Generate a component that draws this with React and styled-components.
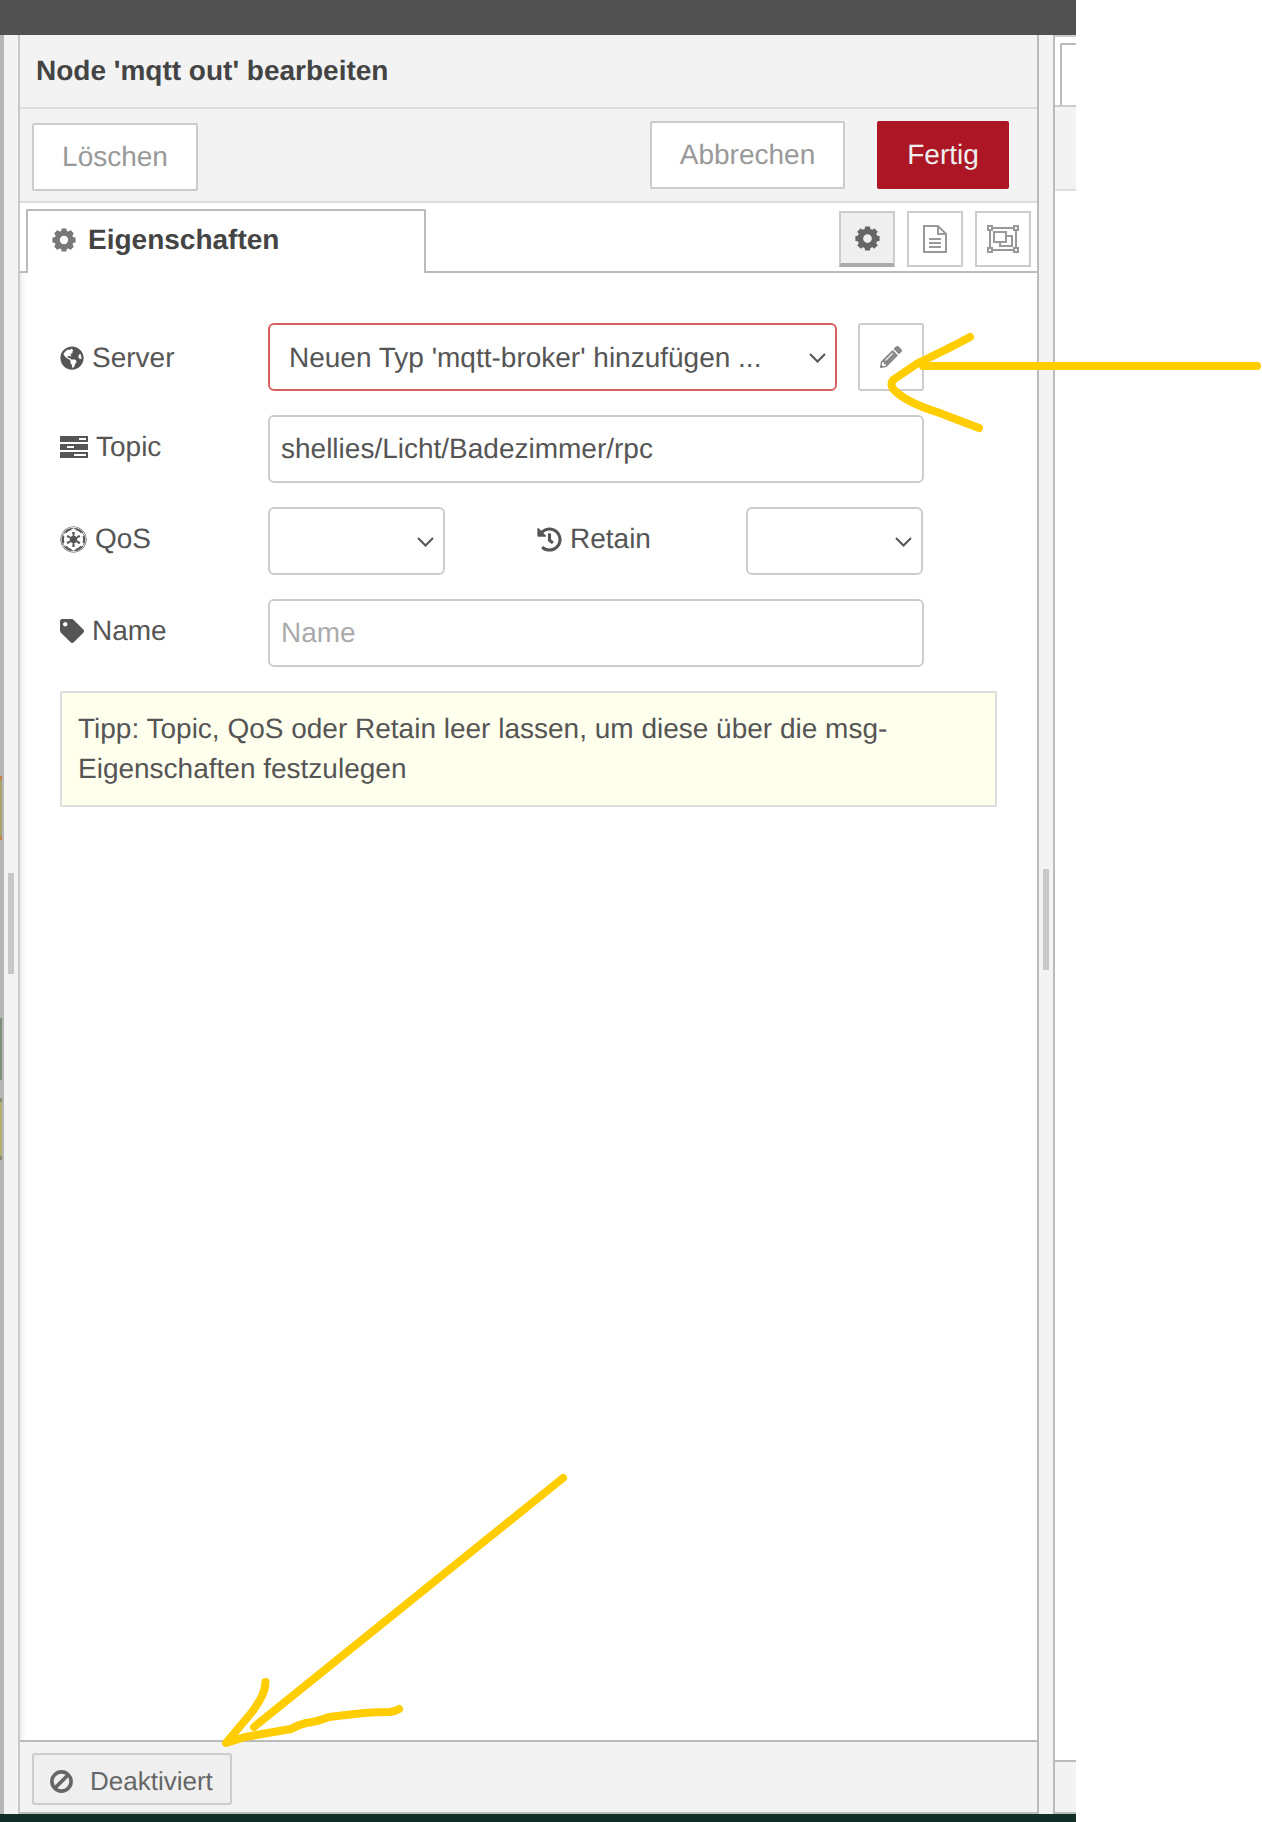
import React from 'react'
import styled, { createGlobalStyle } from 'styled-components'
import { FaGlobeAmericas, FaEmpire, FaTag, FaHistory, FaPencilAlt } from 'react-icons/fa'

const GlobalStyle = createGlobalStyle`
  html, body {
    margin: 0;
    padding: 0;
    background: #fff;
  }
  * {
    box-sizing: border-box;
  }
`

const Page = styled.div`
  position: relative;
  width: 1262px;
  height: 1822px;
  overflow: hidden;
  font-family: 'Liberation Sans', Arial, sans-serif;
  font-size: 28px;
  color: #555;
  text-rendering: geometricPrecision;
`

const Shell = styled.div`
  width: 1076px;
  height: 1822px;
  display: flex;
  flex-direction: column;
`

const TopBar = styled.div`
  height: 35px;
  flex: none;
  background: #515151;
`

const Workspace = styled.div`
  flex: 1;
  display: flex;
  min-height: 0;
`

const BottomBar = styled.div`
  height: 8px;
  flex: none;
  background: #132d27;
`

const Canvas = styled.div`
  position: relative;
  width: 4px;
  flex: none;
  background: #b6b6b6;
`

const CanvasNode = styled.div`
  position: absolute;
  left: 0;
  top: ${props => props.$top}px;
  width: 2px;
  height: ${props => props.$height}px;
  background: ${props => props.$color};
  border-top: 4px solid ${props => props.$cap};
  border-bottom: 4px solid ${props => props.$cap};
`

const Separator = styled.div`
  width: 14px;
  flex: none;
  display: flex;
  align-items: center;
  justify-content: center;
  background: #f3f3f3;
  padding-bottom: ${props => props.$shift}px;
`

const Handle = styled.div`
  width: 6px;
  height: 101px;
  background: #c8c8c8;
`

const Editor = styled.div`
  width: 1021px;
  flex: none;
  display: flex;
  flex-direction: column;
  background: #fff;
  border-left: 2px solid #c9c9c9;
  border-right: 2px solid #bbb;
  border-bottom: 2px solid #bbb;
`

const TitleBar = styled.div`
  height: 74px;
  flex: none;
  display: flex;
  align-items: center;
  padding-left: 16px;
  background: #f3f3f3;
  border-bottom: 2px solid #ddd;
  font-weight: bold;
  color: #444;
`

const ButtonRow = styled.div`
  height: 94px;
  flex: none;
  display: flex;
  align-items: flex-start;
  gap: 32px;
  padding: 12px 28px 0 12px;
  background: #f3f3f3;
  border-bottom: 2px solid #ddd;
`

const ActionButton = styled.div`
  width: ${props => props.$width}px;
  height: 68px;
  display: flex;
  align-items: center;
  justify-content: center;
  border-radius: 2px;
  border: 2px solid ${props => (props.$primary ? '#ad1625' : '#ccc')};
  background: ${props => (props.$primary ? '#ad1625' : '#fff')};
  color: ${props => (props.$primary ? '#eee' : '#999')};
  margin-top: ${props => (props.$low ? 2 : 0)}px;
  margin-right: ${props => (props.$low ? 'auto' : 0)};
`

const TabBar = styled.div`
  height: 70px;
  flex: none;
  display: flex;
  align-items: flex-start;
  padding: 6px 6px 0 6px;
  border-bottom: 2px solid #bbb;
`

const Tab = styled.div`
  width: 400px;
  height: 64px;
  display: flex;
  align-items: center;
  gap: 12px;
  padding: 0 0 4px 24px;
  margin-right: auto;
  background: #fff;
  border: 2px solid #bbb;
  border-bottom: none;
  border-radius: 2px 2px 0 0;
  font-weight: bold;
  color: #444;
`

const TabTools = styled.div`
  display: flex;
  gap: 12px;
  padding-top: 2px;
`

const TabTool = styled.div`
  width: 56px;
  height: 56px;
  display: flex;
  align-items: center;
  justify-content: center;
  border: 2px solid #ccc;
  border-bottom: ${props => (props.$active ? '4px solid #aaa' : '2px solid #ccc')};
  background: ${props => (props.$active ? '#efefef' : '#fff')};
`

const Form = styled.div`
  flex: 1;
  display: flex;
  flex-direction: column;
  gap: 24px;
  padding: 50px 0 0 40px;
  box-shadow: inset 7px 0 6px -6px rgba(0, 0, 0, 0.12);
`

const Row = styled.div`
  display: flex;
  align-items: center;
`

const Label = styled.div`
  width: ${props => props.$width || 208}px;
  flex: none;
  display: flex;
  align-items: center;
  gap: 8px;
  padding-left: ${props => props.$indent || 0}px;
  padding-bottom: ${props => (props.$flush ? 0 : 4)}px;
  padding-top: ${props => (props.$flush ? 2 : 0)}px;
`

const IconSlot = styled.span`
  display: inline-flex;
  flex: none;
  color: #555;
`

const Field = styled.div`
  width: ${props => props.$width}px;
  height: 68px;
  flex: none;
  display: flex;
  align-items: center;
  padding-left: 11px;
  background: #fff;
  border: 2px solid #ccc;
  border-radius: 6px;
  color: ${props => (props.$placeholder ? '#aaa' : '#555')};
`

const Select = styled.div`
  width: ${props => props.$width}px;
  height: 68px;
  flex: none;
  display: flex;
  align-items: center;
  justify-content: space-between;
  padding: 2px 9px 0 19px;
  background: #fff;
  border: 2px solid ${props => (props.$invalid ? '#d6615f' : '#ccc')};
  border-radius: 6px;
`

const EditButton = styled.div`
  width: 66px;
  height: 68px;
  flex: none;
  margin-left: 21px;
  display: flex;
  align-items: center;
  justify-content: center;
  background: #fff;
  border: 2px solid #ccc;
  border-radius: 3px;
  color: #888;
`

const Tip = styled.div`
  width: 937px;
  padding: 16px 16px 16px;
  line-height: 40px;
  background: #ffffee;
  border: 2px solid #ddd;
  border-radius: 2px;
`

const Tray = styled.div`
  height: 72px;
  flex: none;
  padding: 11px 0 0 12px;
  background: #f3f3f3;
  border-top: 2px solid #bbb;
`

const ToggleButton = styled.div`
  width: 200px;
  height: 52px;
  display: flex;
  align-items: center;
  gap: 17px;
  padding: 4px 0 0 16px;
  background: #efefef;
  border: 2px solid #ccc;
  border-radius: 3px;
  font-size: 26px;
  color: #666;
`

const Sidebar = styled.div`
  flex: 1;
  display: flex;
  flex-direction: column;
  background: #fff;
  border-left: 2px solid #bbb;
  border-bottom: 2px solid #bbb;
`

const SideTabs = styled.div`
  height: 72px;
  flex: none;
  padding: 6px 0 0 5px;
  border-top: 2px solid #ccc;
  border-bottom: 2px solid #ccc;
`

const SideTab = styled.div`
  height: 100%;
  margin-bottom: -2px;
  border: 2px solid #bbb;
  border-right: none;
  border-bottom: none;
  border-radius: 2px 0 0 0;
  background: #fff;
`

const SideToolbar = styled.div`
  height: 84px;
  flex: none;
  background: #f3f3f3;
  border-bottom: 2px solid #ddd;
`

const SideBody = styled.div`
  flex: 1;
`

const SideTray = styled.div`
  height: 52px;
  flex: none;
  background: #f3f3f3;
  border-top: 2px solid #bbb;
`

const Scribbles = styled.svg`
  position: absolute;
  left: 0;
  top: 0;
  pointer-events: none;
`

const Gear = ({ size, color }) => (
  <svg width={size} height={size} viewBox="0 0 24 24" fill={color}>
    {[0, 45, 90, 135, 180, 225, 270, 315].map(angle => (
      <path key={angle} d="M9.6 0.4h4.8l0.6 5h-6z" transform={`rotate(${angle} 12 12)`} />
    ))}
    <circle cx="12" cy="12" r="6.9" fill="none" stroke={color} strokeWidth="5.4" />
  </svg>
)

const TopicIcon = () => (
  <svg width="28" height="22" viewBox="0 0 28 22">
    <rect y="0" width="28" height="6" fill="#555" />
    <rect y="8" width="28" height="6" fill="#555" />
    <rect y="16" width="28" height="6" fill="#555" />
    <rect x="19" y="2" width="7" height="2" fill="#fff" />
    <rect x="7" y="10" width="7" height="2" fill="#fff" />
    <rect x="14" y="18" width="12" height="2" fill="#fff" />
  </svg>
)

const FileIcon = () => (
  <svg width="24" height="28" viewBox="0 0 24 28" fill="none" stroke="#999" strokeWidth="2">
    <path d="M1 1h14l8 8v18H1z" />
    <path d="M15 1v8h8" />
    <path d="M6 14h12M6 18h12M6 22h12" />
  </svg>
)

const GroupIcon = () => (
  <svg width="32" height="28" viewBox="0 0 32 28" fill="none" stroke="#999" strokeWidth="2">
    <rect x="1" y="1" width="4" height="4" />
    <rect x="27" y="1" width="4" height="4" />
    <rect x="1" y="23" width="4" height="4" />
    <rect x="27" y="23" width="4" height="4" />
    <path d="M5 3h22M5 25h22M3 5v18M29 5v18" />
    <rect x="7" y="7" width="12" height="10" />
    <path d="M19 11h6v10H13v-4" />
  </svg>
)

const BanIcon = () => (
  <svg width="23" height="23" viewBox="0 0 23 23" fill="none" stroke="#666" strokeWidth="3.6">
    <circle cx="11.5" cy="11.5" r="9.6" />
    <path d="M5 18L18 5" />
  </svg>
)

const Chevron = () => (
  <svg width="17" height="10" viewBox="0 0 17 10" fill="none" stroke="#555" strokeWidth="2">
    <path d="M1 1l7.5 7.5L16 1" />
  </svg>
)

const canvasNodes = [
  { top: 741, height: 64, color: '#a9a66d', cap: '#c9814a' },
  { top: 983, height: 62, color: '#7f8f7a', cap: '#7f8f7a' },
  { top: 1063, height: 62, color: '#b3b070', cap: '#8a8a7a' }
]

export default function App() {
  return (
    <Page>
      <GlobalStyle />
      <Shell>
        <TopBar />
        <Workspace>
          <Canvas>
            {canvasNodes.map(node => (
              <CanvasNode
                key={node.top}
                $top={node.top}
                $height={node.height}
                $color={node.color}
                $cap={node.cap}
              />
            ))}
          </Canvas>
          <Separator $shift={2}>
            <Handle />
          </Separator>
          <Editor>
            <TitleBar>Node 'mqtt out' bearbeiten</TitleBar>
            <ButtonRow>
              <ActionButton $width={166} $low>Löschen</ActionButton>
              <ActionButton $width={195}>Abbrechen</ActionButton>
              <ActionButton $width={132} $primary>Fertig</ActionButton>
            </ButtonRow>
            <TabBar>
              <Tab>
                <Gear size={24} color="#777" />
                Eigenschaften
              </Tab>
              <TabTools>
                <TabTool $active><Gear size={25} color="#666" /></TabTool>
                <TabTool><FileIcon /></TabTool>
                <TabTool><GroupIcon /></TabTool>
              </TabTools>
            </TabBar>
            <Form>
              <Row>
                <Label $flush>
                  <IconSlot><FaGlobeAmericas size={24} /></IconSlot>
                  Server
                </Label>
                <Select $width={569} $invalid>
                  Neuen Typ 'mqtt-broker' hinzufügen ...
                  <Chevron />
                </Select>
                <EditButton><FaPencilAlt size={22} /></EditButton>
              </Row>
              <Row>
                <Label>
                  <IconSlot><TopicIcon /></IconSlot>
                  <span>Topic</span>
                </Label>
                <Field $width={656}>shellies/Licht/Badezimmer/rpc</Field>
              </Row>
              <Row>
                <Label>
                  <IconSlot><FaEmpire size={27} /></IconSlot>
                  QoS
                </Label>
                <Select $width={177}>
                  <span />
                  <Chevron />
                </Select>
                <Label $width={301} $indent={92}>
                  <IconSlot><FaHistory size={25} /></IconSlot>
                  Retain
                </Label>
                <Select $width={177}>
                  <span />
                  <Chevron />
                </Select>
              </Row>
              <Row>
                <Label>
                  <IconSlot><FaTag size={24} /></IconSlot>
                  Name
                </Label>
                <Field $width={656} $placeholder>Name</Field>
              </Row>
              <Tip>Tipp: Topic, QoS oder Retain leer lassen, um diese über die msg-Eigenschaften festzulegen</Tip>
            </Form>
            <Tray>
              <ToggleButton>
                <BanIcon />
                Deaktiviert
              </ToggleButton>
            </Tray>
          </Editor>
          <Separator $shift={10}>
            <Handle />
          </Separator>
          <Sidebar>
            <SideTabs>
              <SideTab />
            </SideTabs>
            <SideToolbar />
            <SideBody />
            <SideTray />
          </Sidebar>
        </Workspace>
        <BottomBar />
      </Shell>
      <Scribbles width="1262" height="1822" fill="none" stroke="#ffcd00" strokeWidth="8" strokeLinecap="round" strokeLinejoin="round">
        <path d="M1257 366H923" />
        <path d="M970 337Q948 349 918 363L893 380Q889 385 895 391Q908 403 937 412Q950 417 979 428" />
        <path d="M563 1478L254 1727" />
        <path d="M265.5 1682Q265 1690 262 1696Q258 1704 252 1712L226 1743L245 1737Q268 1733 291 1729Q298 1725 306 1723Q316 1722 329 1717Q345 1715 364 1713Q380 1712 390 1712Q396 1711 399 1709" />
      </Scribbles>
    </Page>
  )
}
